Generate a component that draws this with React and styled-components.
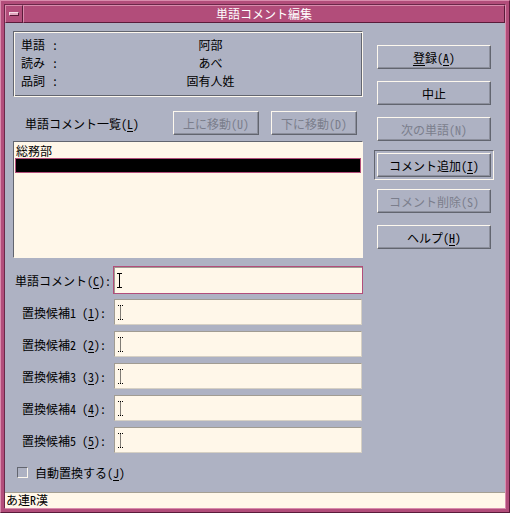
import React from "react";
import styled, { createGlobalStyle } from "styled-components";

const GlobalStyle = createGlobalStyle`
  html, body {
    margin: 0;
    padding: 0;
    background: #aeb2c3;
  }
  body {
    font-family: "Noto Sans CJK JP", "Noto Sans", sans-serif;
    font-size: 12px;
    font-feature-settings: "hwid" 1;
    color: #000;
  }
  * {
    box-sizing: border-box;
  }
`;

const Window = styled.div`
  width: 510px;
  height: 513px;
  padding: 3px;
  background: #b24d7a;
  border: 1px solid;
  border-color: #d98cad #5a1b3a #5a1b3a #d98cad;
`;

const Client = styled.div`
  height: 100%;
  display: flex;
  flex-direction: column;
  background: #aeb2c3;
  border: 1px solid;
  border-color: #6b2849 #d98cad #d98cad #6b2849;
`;

const TitleBar = styled.div`
  flex: none;
  height: 18px;
  display: flex;
  background: #b24d7a;
`;

const MenuButton = styled.div`
  width: 18px;
  display: flex;
  align-items: center;
  justify-content: center;
  border: 1px solid;
  border-color: #d98cad #5a1b3a #5a1b3a #d98cad;
`;

const MenuBar = styled.div`
  width: 10px;
  height: 4px;
  background: #e2a8c0;
  border: 1px solid;
  border-color: #f6dce6 #5a1b3a #5a1b3a #f6dce6;
`;

const Title = styled.div`
  flex: 1;
  color: #fff;
  text-align: center;
  line-height: 15px;
  border: 1px solid;
  border-color: #d98cad #5a1b3a #5a1b3a #d98cad;
`;

const Content = styled.div`
  flex: 1;
  display: flex;
  padding: 8px 0 0 8px;
`;

const LeftCol = styled.div`
  width: 350px;
  display: flex;
  flex-direction: column;
`;

const RightCol = styled.div`
  width: 114px;
  margin-left: 14px;
  padding-top: 14px;
  display: flex;
  flex-direction: column;
  gap: 12px;
`;

const InfoBox = styled.div`
  height: 66px;
  padding: 4px 7px;
  border: 1px solid;
  border-color: #62656f #fdf8ee #fdf8ee #62656f;
  box-shadow: inset 1px 1px 0 #fdf8ee, inset -1px -1px 0 #62656f;
`;

const InfoRow = styled.div`
  display: flex;
  height: 18px;
  line-height: 18px;
`;

const InfoName = styled.span`
  width: 31px;
`;

const InfoValue = styled.span`
  flex: 1;
  text-align: center;
  padding-left: 8px;
`;

const ListHeader = styled.div`
  margin-top: 14px;
  height: 24px;
  display: flex;
  align-items: center;
  gap: 12px;
  padding: 0 6px 0 12px;
`;

const ListTitle = styled.span`
  margin-right: auto;
`;

const Button = styled.button`
  width: ${(p) => p.$w || 114}px;
  height: 24px;
  padding: 0;
  font: inherit;
  font-feature-settings: "hwid" 1;
  color: #000;
  background: #aeb2c3;
  border: 1px solid;
  border-color: #fdf8ee #62656f #62656f #fdf8ee;
  box-shadow: inset -1px -1px 0 #8c8f9c;

  &:disabled {
    color: #7b7e8c;
  }
`;

const DefaultFrame = styled.div`
  margin: -3px;
  padding: 2px;
  border: 1px solid;
  border-color: #62656f #fdf8ee #fdf8ee #62656f;
`;

const U = styled.span`
  text-decoration: underline;
  text-underline-offset: 2px;
`;

const List = styled.div`
  margin-top: 6px;
  height: 117px;
  padding: 1px;
  background: #fff7e9;
  border: 1px solid;
  border-color: #62656f #fff7e9 #fff7e9 #62656f;
`;

const ListItem = styled.div`
  height: 15px;
  line-height: 15px;
  padding-left: 1px;
  background: ${(p) => (p.$selected ? "#000" : "transparent")};
  color: ${(p) => (p.$selected ? "#fff" : "#000")};
  border: ${(p) => (p.$selected ? "1px solid #b24d7a" : "none")};
`;

const FieldRow = styled.div`
  margin-top: ${(p) => p.$gap}px;
  height: ${(p) => p.$h}px;
  display: flex;
  align-items: center;
  padding-left: ${(p) => p.$indent}px;
  padding-right: ${(p) => p.$right}px;
`;

const FieldLabel = styled.span`
  white-space: pre;
`;

const Field = styled.div`
  margin-left: auto;
  width: ${(p) => p.$w}px;
  height: 100%;
  display: flex;
  align-items: center;
  padding-left: 3px;
  background: #fff7e9;
  border: 1px solid;
  border-color: ${(p) =>
    p.$focused ? "#b24d7a" : "#a19c92 #d6d0c4 #d6d0c4 #a19c92"};
  box-shadow: ${(p) => (p.$focused ? "inset 1px 1px 0 #a19c92" : "none")};
`;

const CheckRow = styled.label`
  margin-top: 14px;
  height: 11px;
  display: flex;
  align-items: center;
  gap: 7px;
  padding-left: 4px;
`;

const CheckBox = styled.span`
  width: 11px;
  height: 11px;
  border: 1px solid;
  border-color: #62656f #fdf8ee #fdf8ee #62656f;
`;

const StatusBar = styled.div`
  flex: none;
  height: 16px;
  line-height: 14px;
  padding-left: 1px;
  background: #fff7e9;
  border-top: 1px solid #a59f92;
`;

const Caret = ({ dotted }) => (
  <svg width="5" height="15" viewBox="0 0 5 15">
    <path
      d="M0 0.5H5M2.5 0.5V14.5M0 14.5H5"
      stroke="#000"
      strokeWidth="1"
      strokeDasharray={dotted ? "1 1" : undefined}
      fill="none"
    />
  </svg>
);

const info = [
  ["単語", "阿部"],
  ["読み", "あべ"],
  ["品詞", "固有人姓"],
];

const candidates = ["1", "2", "3", "4", "5"];

export default function App() {
  return (
    <>
      <GlobalStyle />
      <Window>
        <Client>
          <TitleBar>
            <MenuButton>
              <MenuBar />
            </MenuButton>
            <Title>単語コメント編集</Title>
          </TitleBar>
          <Content>
            <LeftCol>
              <InfoBox>
                {info.map(([name, value]) => (
                  <InfoRow key={name}>
                    <InfoName>{name}</InfoName>
                    <span>:</span>
                    <InfoValue>{value}</InfoValue>
                  </InfoRow>
                ))}
              </InfoBox>
              <ListHeader>
                <ListTitle>
                  単語コメント一覧(<U>L</U>)
                </ListTitle>
                <Button $w={86} disabled>
                  上に移動(U)
                </Button>
                <Button $w={86} disabled>
                  下に移動(D)
                </Button>
              </ListHeader>
              <List>
                <ListItem>総務部</ListItem>
                <ListItem $selected />
              </List>
              <FieldRow $gap={8} $h={28} $indent={2} $right={0}>
                <FieldLabel>
                  単語コメント(<U>C</U>):
                </FieldLabel>
                <Field $w={250} $focused>
                  <Caret />
                </Field>
              </FieldRow>
              {candidates.map((n, i) => (
                <FieldRow key={n} $gap={i === 0 ? 5 : 6} $h={26} $indent={9} $right={1}>
                  <FieldLabel>
                    置換候補{n} (<U>{n}</U>):
                  </FieldLabel>
                  <Field $w={248}>
                    <Caret dotted />
                  </Field>
                </FieldRow>
              ))}
              <CheckRow>
                <CheckBox />
                <span>
                  自動置換する(<U>J</U>)
                </span>
              </CheckRow>
            </LeftCol>
            <RightCol>
              <Button>
                <U>登</U>録(<U>A</U>)
              </Button>
              <Button>中止</Button>
              <Button disabled>次の単語(N)</Button>
              <DefaultFrame>
                <Button>
                  コメント追加(<U>I</U>)
                </Button>
              </DefaultFrame>
              <Button disabled>コメント削除(S)</Button>
              <Button>
                ヘルプ(<U>H</U>)
              </Button>
            </RightCol>
          </Content>
          <StatusBar>あ連R漢</StatusBar>
        </Client>
      </Window>
    </>
  );
}
